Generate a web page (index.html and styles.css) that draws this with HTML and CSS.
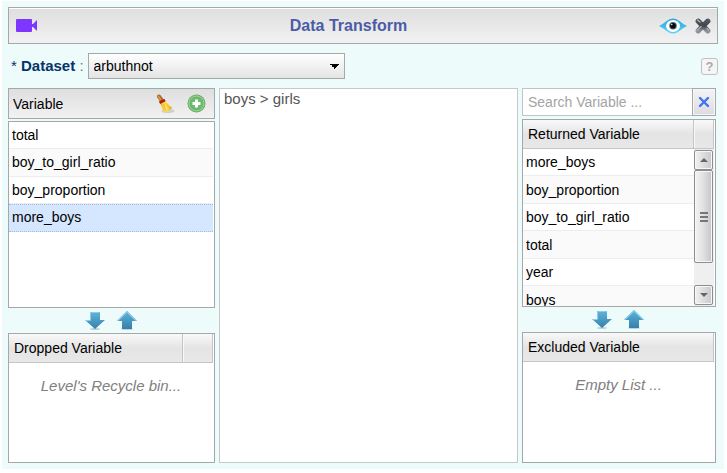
FILE: index.html
```
<!DOCTYPE html>
<html lang="en">
<head>
<meta charset="utf-8">
<title>Data Transform</title>
<link rel="stylesheet" href="styles.css">
</head>
<body>
<svg class="defs" aria-hidden="true">
  <defs>
    <linearGradient id="blue" x1="0" y1="0" x2="0" y2="1"><stop offset="0" stop-color="#5fb4da"/><stop offset="1" stop-color="#3480ac"/></linearGradient>
    <linearGradient id="iris" x1="0" y1="0" x2="0" y2="1"><stop offset="0" stop-color="#1ba6de"/><stop offset="1" stop-color="#5dd3fa"/></linearGradient>
    <linearGradient id="steel" x1="0" y1="0" x2="0" y2="1"><stop offset="0" stop-color="#50565c"/><stop offset=".5" stop-color="#3d444b"/><stop offset="1" stop-color="#8b9299"/></linearGradient>
    <linearGradient id="straw" x1="0" y1="0" x2="1" y2="0"><stop offset="0" stop-color="#e6b422"/><stop offset=".5" stop-color="#ffe75c"/><stop offset="1" stop-color="#dfac20"/></linearGradient>
    <symbol id="down" viewBox="0 0 20 20">
      <ellipse cx="10" cy="18" rx="5" ry="1" fill="#bdd3d8"/>
      <path d="M5 1h10v8h5l-10 9L0 9h5z" fill="url(#blue)"/><path d="M1 9.500H5.500V1.500h9" fill="none" stroke="#8dcbe6"/>
    </symbol>
    <symbol id="up" viewBox="0 0 20 20">
      <ellipse cx="10" cy="18" rx="6" ry="1" fill="#bdd3d8"/>
      <path d="M10 0l10 10h-5v8H5v-8H0z" fill="url(#blue)"/><path d="M1 9.500L10 .8l9 8.700" fill="none" stroke="#8ccbed" stroke-width="1.400"/>
    </symbol>
  </defs>
</svg>
<main class="panel">
  <header class="titlebar">
    <button class="icon-button" aria-label="Video help">
      <svg width="22" height="14" viewBox="0 0 22 14"><rect x="0" y="0" width="16" height="13" rx="1" fill="#7d37ff"/><path d="M15 5h2L21 1v11l-4-4h-2z" fill="#7d37ff"/></svg>
    </button>
    <h1>Data Transform</h1>
    <div class="actions">
      <button class="icon-button" aria-label="Preview">
        <svg width="28" height="16" viewBox="0 0 28 16"><path d="M0 8Q4 6 7 3.500Q14-2.500 21 3.500Q24 6 28 8Q24 10 21 12.500Q14 18.500 7 12.500Q4 10 0 8z" fill="url(#iris)"/><ellipse cx="14" cy="8" rx="7" ry="6" fill="#fff"/><circle cx="14" cy="7.700" r="3.800" fill="#526976"/><circle cx="14" cy="7.700" r="2.800" fill="#080c0e"/><circle cx="12.800" cy="6.500" r=".7" fill="#fff"/></svg>
      </button>
      <button class="icon-button" aria-label="Close">
        <svg width="16" height="16" viewBox="0 0 16 16"><path d="M3.200 3.200l9.600 9.600M12.800 3.200l-9.600 9.600" stroke="url(#steel)" stroke-width="5.200" stroke-linecap="round"/><path d="M2.500 2l2.500 2M2 12.500l4-4M12 10.500l1.500 1.500" stroke="#a9b0b6" stroke-width="1.400" stroke-linecap="round"/></svg>
      </button>
    </div>
  </header>

  <div class="dataset-row">
    <label for="dataset"><span>*</span> <b>Dataset</b> <i>:</i></label>
    <select id="dataset"><option>arbuthnot</option></select>
    <button class="help" aria-label="Help">?</button>
  </div>

  <div class="workspace">
    <section class="column">
      <div class="toolbar">
        <h2>Variable</h2>
        <button class="icon-button" aria-label="Clear variables">
          <svg width="20" height="20" viewBox="0 0 20 20"><ellipse cx="13" cy="17" rx="6.500" ry="2" fill="#cfcfcf"/><path d="M4 2.500L6.500 6" stroke="#a8702a" stroke-width="4" stroke-linecap="round"/><path d="M3.500 2.500L5.500 5.500" stroke="#dba65a" stroke-width="1.300" stroke-linecap="round"/><path d="M5 9L10.500 6.500Q13.500 11 17.500 14Q14 17.500 8.500 18.500Q7.500 14 5 9z" fill="url(#straw)"/><path d="M8.500 10l2.500 7M10.500 9l4.500 6" stroke="#d9a526" stroke-width=".6"/><path d="M4.500 8.700L10 6" stroke="#b51c16" stroke-width="2.800"/></svg>
        </button>
        <button class="icon-button" aria-label="Add variable">
          <svg width="19" height="19" viewBox="0 0 19 19"><circle cx="9.500" cy="9.500" r="9" fill="#5da65e"/><circle cx="9.500" cy="9.500" r="7.600" fill="#6cba6d" stroke="#a7d9a4" stroke-width="1"/><path d="M9.500 5.500v8M5.500 9.500h8" stroke="#fff" stroke-width="3"/></svg>
        </button>
      </div>
      <div class="box list-box left-list">
        <ul class="rows">
          <li>total</li><li>boy_to_girl_ratio</li><li>boy_proportion</li><li class="selected">more_boys</li>
        </ul>
      </div>
      <div class="movers">
        <button class="icon-button" aria-label="Drop variable"><svg width="20" height="20"><use href="#down"/></svg></button>
        <button class="icon-button" aria-label="Restore variable"><svg width="20" height="20"><use href="#up"/></svg></button>
      </div>
      <div class="box bin">
        <div class="list-head"><h2>Dropped Variable</h2><span class="corner wide"></span></div>
        <p class="empty">Level's Recycle bin...</p>
      </div>
    </section>

    <textarea class="editor" aria-label="Expression" spellcheck="false">boys &gt; girls</textarea>

    <section class="column">
      <div class="search">
        <input type="text" placeholder="Search Variable ..." aria-label="Search Variable">
        <button aria-label="Clear search"><svg width="12" height="12" viewBox="0 0 12 12"><path d="M2 2l8 8M10 2l-8 8" stroke="#4272ec" stroke-width="2.400" stroke-linecap="round"/></svg></button>
      </div>
      <div class="box list-box right-list">
        <div class="list-head"><h2>Returned Variable</h2><span class="corner"></span></div>
        <div class="scroll-area">
          <ul class="rows">
            <li>more_boys</li><li>boy_proportion</li><li>boy_to_girl_ratio</li><li>total</li><li>year</li><li>boys</li>
          </ul>
          <div class="scrollbar" aria-hidden="true">
            <span class="scroll-end"><svg width="8" height="4"><path d="M0 4l4-4 4 4z" fill="#666"/></svg></span>
            <span class="thumb"><i></i><i></i><i></i></span>
            <span class="track"></span>
            <span class="scroll-end"><svg width="8" height="4"><path d="M0 0l4 4 4-4z" fill="#666"/></svg></span>
          </div>
        </div>
      </div>
      <div class="movers">
        <button class="icon-button" aria-label="Exclude variable"><svg width="20" height="20"><use href="#down"/></svg></button>
        <button class="icon-button" aria-label="Return variable"><svg width="20" height="20"><use href="#up"/></svg></button>
      </div>
      <div class="box bin">
        <div class="list-head"><h2>Excluded Variable</h2></div>
        <p class="empty">Empty List ...</p>
      </div>
    </section>
  </div>
</main>
</body>
</html>
```
FILE: styles.css
```
* { box-sizing: border-box; }

body {
  margin: 0;
  min-height: 100vh;
  display: flex;
  background: #fff;
  color: #000;
  font: 14px/18px "Liberation Sans", Arial, sans-serif;
}

button, input, select, textarea { font: inherit; border-radius: 0; }
h1, h2, p, ul { margin: 0; padding: 0; font-weight: normal; }
h2 { font-size: 14px; }
svg { display: block; }
.defs { position: absolute; width: 0; height: 0; }

.icon-button { padding: 0; border: 0; background: none; }

.panel {
  flex: 1;
  min-width: 0;
  margin: 1px 3px 4px 2px;
  padding: 6px;
  display: flex;
  flex-direction: column;
  background: #eefbfb;
}

.titlebar {
  height: 37px;
  padding: 0 6px 0 7px;
  display: flex;
  align-items: center;
  border: 1px solid #a6a8a8;
  box-shadow: inset 0 1px #fff;
  background: linear-gradient(#dedede, #f2f2f2);
}
.titlebar h1 { flex: 1; text-align: center; color: #4a5ca6; font-size: 16px; font-weight: bold; }
.actions { display: flex; align-items: center; gap: 8px; }

.dataset-row {
  margin: 9px 0;
  display: flex;
  align-items: center;
  gap: 4px;
}
.dataset-row label { padding-left: 3px; color: #04346b; font-size: 15px; white-space: nowrap; }
.dataset-row label i { color: #777; font-style: normal; }
.dataset-row select {
  width: 257px;
  height: 26px;
  padding: 0 5px;
  appearance: none;
  border: 1px solid #a6a8a8;
  color: #000;
  background:
    linear-gradient(to bottom right, #000 50%, transparent 50%) right 4px center / 5px 5px no-repeat,
    linear-gradient(to bottom left, #000 50%, transparent 50%) right 9px center / 5px 5px no-repeat,
    linear-gradient(#fff, #e4e4e4);
}
.help {
  width: 17px;
  height: 17px;
  margin-left: auto;
  padding: 0;
  border: 1px solid #c0c0c0;
  border-radius: 3px;
  background: #f5f5f5;
  color: #aaa;
  font-size: 13px;
  font-weight: bold;
  line-height: 15px;
}

.workspace {
  flex: 1;
  margin-right: 2px;
  display: grid;
  grid-template-columns: 207fr 299fr 194fr;
  gap: 4px;
}
.column { min-width: 0; display: flex; flex-direction: column; }

.toolbar {
  height: 31px;
  margin-bottom: 2px;
  padding: 0 8px 0 4px;
  display: flex;
  align-items: center;
  gap: 12px;
  border: 1px solid #a6a8a8;
  background: linear-gradient(#dedede, #f2f2f2);
}
.toolbar h2 { flex: 1; }

.box { border: 1px solid #a6a8a8; background: #fff; }
.list-box { overflow: hidden; }
.left-list { height: 187px; padding-right: 1px; }
.right-list { height: 188px; padding-right: 1px; }
.bin { flex: 1; padding-right: 1px; }

.rows { flex: 1; list-style: none; }
.rows li {
  height: 27px;
  padding: 4px 3px;
  border-bottom: 1px solid #ededed;
}
.rows li:nth-child(even) { height: 28px; background: #fafafa; }
.right-list .rows li:nth-child(even) { padding-top: 5px; }
.rows li.selected,
.rows li.selected:nth-child(even) {
  padding-top: 3px;
  border-top: 1px dotted #a3bae9;
  border-bottom: 1px dotted #a3bae9;
  background: #d5e6ff;
}

.list-head {
  height: 29px;
  display: flex;
  border-right: 1px solid #c5c5c5;
  border-bottom: 1px solid #c5c5c5;
  background: linear-gradient(#f9f9f9, #e4e4e4 50%, #e8e8e8);
}
.list-head h2 { flex: 1; padding: 5px; }
.corner { width: 20px; border-left: 1px solid #c5c5c5; box-shadow: inset 1px 0 #f8f8f8; }
.corner.wide { width: 30px; }

.scroll-area { display: flex; height: 157px; }
.scrollbar {
  width: 20px;
  padding: 1px 1px 1px 0;
  display: flex;
  flex-direction: column;
  background: #efefef;
}
.scroll-end, .thumb {
  border: 1px solid #8e8e8e;
  border-radius: 2px;
  box-shadow: inset 0 0 0 1px #f7f7f7;
  display: flex;
  align-items: center;
  justify-content: center;
}
.scroll-end { height: 20px; background: linear-gradient(to right, #f1f1f1, #c9c9cc); }
.thumb {
  height: 93px;
  flex-direction: column;
  gap: 2px;
  background: linear-gradient(to right, #f3f3f3, #e3e3e5 45%, #c4c5c9);
}
.thumb i { width: 8px; height: 2px; background: #777; }
.track { flex: 1; }

.movers {
  height: 25px;
  padding-right: 2px;
  display: flex;
  align-items: center;
  justify-content: center;
  gap: 12px;
}

.empty {
  padding: 14px 0;
  color: #808080;
  font-size: 15px;
  font-style: italic;
  text-align: center;
}

.editor {
  width: 100%;
  height: 100%;
  padding: 1px 4px;
  resize: none;
  border: 1px solid #c5c9c9;
  outline: 0;
  background: #fff;
  color: #555;
  font-size: 15px;
}

.search { height: 28px; margin-bottom: 3px; display: flex; }
.search input {
  flex: 1;
  min-width: 0;
  padding: 0 5px;
  border: 1px solid #c0c4c4;
  border-right: 0;
  outline: 0;
  background: #fff;
}
.search input::placeholder { color: #a4a4a4; opacity: 1; }
.search button {
  width: 24px;
  padding: 0;
  display: flex;
  align-items: center;
  justify-content: center;
  border: 1px solid #a6a8b4;
  box-shadow: inset 0 0 0 1px #f5f5f5;
  background: linear-gradient(#f4f4f4, #dcdce0);
}
```
